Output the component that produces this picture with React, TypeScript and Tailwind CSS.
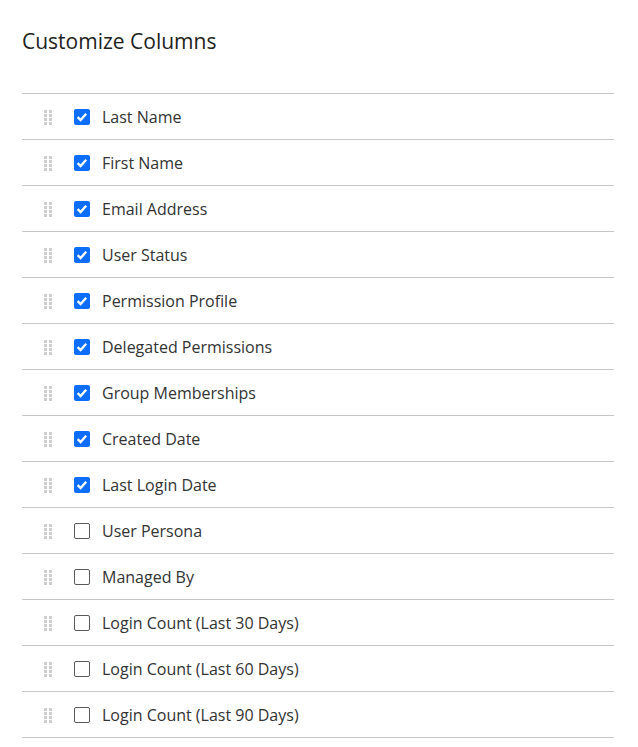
const columns = [
  { label: "Last Name", checked: true },
  { label: "First Name", checked: true },
  { label: "Email Address", checked: true },
  { label: "User Status", checked: true },
  { label: "Permission Profile", checked: true },
  { label: "Delegated Permissions", checked: true },
  { label: "Group Memberships", checked: true },
  { label: "Created Date", checked: true },
  { label: "Last Login Date", checked: true },
  { label: "User Persona", checked: false },
  { label: "Managed By", checked: false },
  { label: "Login Count (Last 30 Days)", checked: false },
  { label: "Login Count (Last 60 Days)", checked: false },
  { label: "Login Count (Last 90 Days)", checked: false },
];

function Grip() {
  return (
    <svg width="8" height="16" viewBox="0 0 8 16" className="shrink-0">
      {[0, 1, 2, 3].map((r) =>
        [0, 1].map((c) => (
          <rect
            key={`${r}-${c}`}
            x={c * 5}
            y={r * 4 + 1}
            width="3"
            height="3"
            fill="#cfcfcf"
          />
        ))
      )}
    </svg>
  );
}

function Checkbox({ checked }: { checked: boolean }) {
  if (checked) {
    return (
      <span className="flex h-4 w-4 shrink-0 items-center justify-center rounded-[2px] bg-[#0d6efd]">
        <svg width="14" height="14" viewBox="0 0 14 14">
          <path
            d="M2.6 7.2 L5.6 10 L11.2 3.8"
            fill="none"
            stroke="white"
            strokeWidth="2.4"
          />
        </svg>
      </span>
    );
  }
  return (
    <span className="h-4 w-4 shrink-0 rounded-[2px] border border-[#5a5a5a] bg-white" />
  );
}

export default function App() {
  return (
    <div
      className="min-h-screen bg-white px-[22px] pt-[28px] text-[#2b2b2b]"
      style={{ fontFamily: "'Open Sans', 'Noto Sans', sans-serif" }}
    >
      <h2 className="text-[21px] leading-[26px] text-[#222]">Customize Columns</h2>
      <ul className="mt-[39px] w-[592px] border-b border-[#c6c6c6]">
        {columns.map((col) => (
          <li
            key={col.label}
            className="flex h-[46px] items-center border-t border-[#c6c6c6]"
          >
            <span className="ml-[22px] flex w-[30px]">
              <Grip />
            </span>
            <Checkbox checked={col.checked} />
            <span className="ml-[12px] text-[16px] text-[#333]">{col.label}</span>
          </li>
        ))}
      </ul>
    </div>
  );
}
